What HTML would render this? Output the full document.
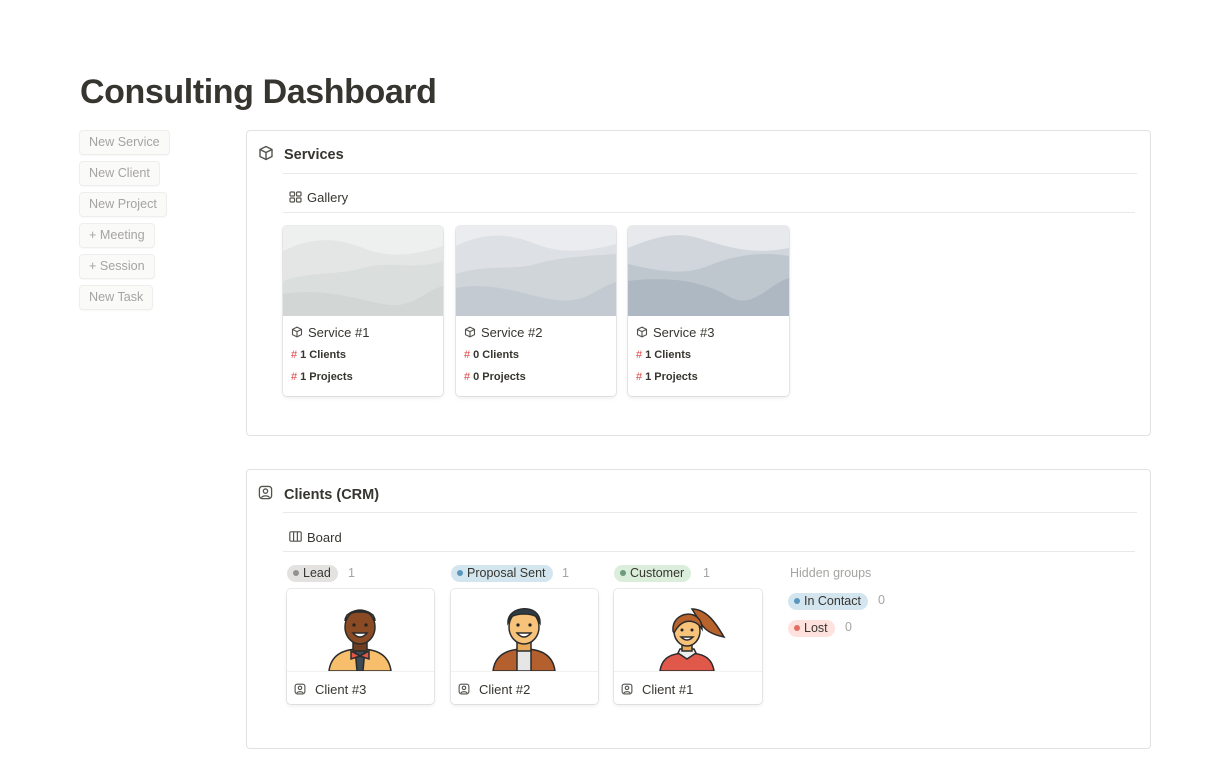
<!DOCTYPE html>
<html><head><meta charset="utf-8"><style>
*{box-sizing:border-box;margin:0;padding:0}
body{width:1229px;height:768px;background:#fff;font-family:"Liberation Sans",sans-serif;color:#37352f;position:relative;overflow:hidden}
.a{position:absolute}
h1{position:absolute;left:80px;top:73px;font-size:34px;font-weight:bold;color:#37352f;letter-spacing:-0.4px}
.btn{position:absolute;left:79px;height:25px;border:1px solid #eeeeec;border-radius:4px;background:#fafaf9;color:#a5a4a1;font-size:12.6px;line-height:23px;padding:0 9px;box-shadow:0 1px 1px rgba(0,0,0,.03)}
.box{position:absolute;left:246px;width:905px;border:1px solid #e3e2e0;border-radius:4px}
.hd{position:absolute;font-size:14.5px;font-weight:bold;color:#37352f}
.line{position:absolute;height:1px;background:#e9e9e7}
.sub{position:absolute;font-size:13px;color:#37352f}
.card{position:absolute;border-radius:4px;box-shadow:0 0 0 1px rgba(15,15,15,.08),0 2px 4px rgba(15,15,15,.08);overflow:hidden;background:#fff}
.ct{position:absolute;left:8px;font-size:13px;color:#37352f}
.pr{position:absolute;left:8px;font-size:11px;font-weight:bold;color:#37352f}
.pr b{color:#e03e3e;font-weight:normal;margin-right:3px}
.tag{position:absolute;height:17px;border-radius:9px;font-size:12.5px;line-height:17px;padding:0 7px 0 6px;color:#37352f}
.tag i{display:inline-block;width:6px;height:6px;border-radius:50%;margin-right:4px;vertical-align:1px}
.cnt{position:absolute;font-size:12.5px;color:#a5a4a1}
</style></head><body>
<h1>Consulting Dashboard</h1>
<div class="btn" style="top:130px">New Service</div>
<div class="btn" style="top:161px">New Client</div>
<div class="btn" style="top:192px">New Project</div>
<div class="btn" style="top:223px">+ Meeting</div>
<div class="btn" style="top:254px">+ Session</div>
<div class="btn" style="top:285px">New Task</div>

<div class="box" style="top:130px;height:306px"></div>
<svg class="a" style="left:258px;top:145px" width="16" height="16" viewBox="0 0 16 16" fill="none" stroke="#55534e" stroke-width="1.4" stroke-linejoin="round"><path d="M8 1.5L14 4.5V11.5L8 14.5L2 11.5V4.5Z M2 4.5L8 7.5L14 4.5 M8 7.5V14.5"/></svg>
<div class="hd" style="left:284px;top:147px">Services</div>
<div class="line" style="left:283px;top:173px;width:854px"></div>
<svg class="a" style="left:289px;top:191px" width="13" height="12" viewBox="0 0 13 12" fill="none" stroke="#55534e" stroke-width="1.2"><rect x="1" y="1" width="4.5" height="4" rx="1"/><rect x="7.5" y="1" width="4.5" height="4" rx="1"/><rect x="1" y="7" width="4.5" height="4" rx="1"/><rect x="7.5" y="7" width="4.5" height="4" rx="1"/></svg>
<div class="sub" style="left:307px;top:190px">Gallery</div>
<div class="line" style="left:283px;top:212px;width:852px"></div>

<div class="card" style="left:283px;top:226px;width:160px;height:170px">
<svg width="160" height="90" viewBox="0 0 160 90"><rect width="160" height="90" fill="#eef0ef"/><path d="M0 25C30 10 55 12 80 22S130 30 160 20V90H0Z" fill="#e3e6e5"/><path d="M0 55C30 45 50 50 80 42S130 45 160 35V90H0Z" fill="#dadedd"/><path d="M0 68C40 62 70 72 100 78S140 65 160 60V90H0Z" fill="#d2d7d6"/></svg>
<svg class="a" style="left:8px;top:100px" width="12" height="12" viewBox="0 0 16 16" fill="none" stroke="#55534e" stroke-width="1.5" stroke-linejoin="round"><path d="M8 1.5L14 4.5V11.5L8 14.5L2 11.5V4.5Z M2 4.5L8 7.5L14 4.5 M8 7.5V14.5"/></svg>
<div class="ct" style="left:25px;top:99px">Service #1</div>
<div class="pr" style="top:123px"><b>#</b>1 Clients</div>
<div class="pr" style="top:145px"><b>#</b>1 Projects</div></div>

<div class="card" style="left:456px;top:226px;width:160px;height:170px">
<svg width="160" height="90" viewBox="0 0 160 90"><rect width="160" height="90" fill="#eaecef"/><path d="M0 20C30 5 55 8 80 18S130 26 160 18V90H0Z" fill="#dde0e4"/><path d="M0 48C30 38 55 45 80 38S130 30 160 28V90H0Z" fill="#d0d5da"/><path d="M0 62C40 55 70 70 100 74S140 62 160 56V90H0Z" fill="#c4cad1"/></svg>
<svg class="a" style="left:8px;top:100px" width="12" height="12" viewBox="0 0 16 16" fill="none" stroke="#55534e" stroke-width="1.5" stroke-linejoin="round"><path d="M8 1.5L14 4.5V11.5L8 14.5L2 11.5V4.5Z M2 4.5L8 7.5L14 4.5 M8 7.5V14.5"/></svg>
<div class="ct" style="left:25px;top:99px">Service #2</div>
<div class="pr" style="top:123px"><b>#</b>0 Clients</div>
<div class="pr" style="top:145px"><b>#</b>0 Projects</div></div>

<div class="card" style="left:628px;top:226px;width:161px;height:170px">
<svg width="161" height="90" viewBox="0 0 161 90"><rect width="161" height="90" fill="#e8e9ec"/><path d="M0 22C25 12 45 5 70 12S120 30 161 22V90H0Z" fill="#d0d6db"/><path d="M0 38C30 45 55 50 80 40S130 25 161 30V90H0Z" fill="#bfc7ce"/><path d="M0 55C40 50 75 55 100 70S140 58 161 52V90H0Z" fill="#adb8c3"/></svg>
<svg class="a" style="left:8px;top:100px" width="12" height="12" viewBox="0 0 16 16" fill="none" stroke="#55534e" stroke-width="1.5" stroke-linejoin="round"><path d="M8 1.5L14 4.5V11.5L8 14.5L2 11.5V4.5Z M2 4.5L8 7.5L14 4.5 M8 7.5V14.5"/></svg>
<div class="ct" style="left:25px;top:99px">Service #3</div>
<div class="pr" style="top:123px"><b>#</b>1 Clients</div>
<div class="pr" style="top:145px"><b>#</b>1 Projects</div></div>

<div class="box" style="top:469px;height:280px"></div>
<svg class="a" style="left:258px;top:485px" width="15" height="15" viewBox="0 0 16 16" fill="none" stroke="#55534e" stroke-width="1.4"><rect x="1.5" y="1.5" width="13" height="13" rx="3"/><circle cx="8" cy="6.5" r="2.3"/><path d="M3.8 13.5C4.8 11 11.2 11 12.2 13.5"/></svg>
<div class="hd" style="left:284px;top:487px">Clients (CRM)</div>
<div class="line" style="left:283px;top:512px;width:854px"></div>
<svg class="a" style="left:289px;top:531px" width="13" height="11" viewBox="0 0 13 11" fill="none" stroke="#55534e" stroke-width="1.2"><rect x="0.8" y="0.8" width="11.4" height="9.4" rx="1.2"/><path d="M4.6 1V10 M8.4 1V10"/></svg>
<div class="sub" style="left:307px;top:530px">Board</div>
<div class="line" style="left:283px;top:551px;width:852px"></div>

<div class="tag" style="left:287px;top:565px;background:#e3e2e0"><i style="background:#91918e"></i>Lead</div>
<div class="cnt" style="left:348px;top:566px">1</div>
<div class="tag" style="left:451px;top:565px;background:#d3e5ef"><i style="background:#5b97bd"></i>Proposal Sent</div>
<div class="cnt" style="left:562px;top:566px">1</div>
<div class="tag" style="left:614px;top:565px;background:#dbeddb"><i style="background:#6c9b7d"></i>Customer</div>
<div class="cnt" style="left:703px;top:566px">1</div>
<div class="cnt" style="left:790px;top:566px">Hidden groups</div>
<div class="tag" style="left:788px;top:593px;background:#d3e5ef"><i style="background:#5b97bd"></i>In Contact</div>
<div class="cnt" style="left:878px;top:593px">0</div>
<div class="tag" style="left:788px;top:620px;background:#ffe2dd"><i style="background:#e16f64"></i>Lost</div>
<div class="cnt" style="left:845px;top:620px">0</div>

<div class="card" style="left:287px;top:589px;width:147px;height:115px">
<svg width="147" height="82" viewBox="0 0 147 82"><g stroke="#2b2b2b" stroke-width="1.5"><path d="M42 82C44 66 56 60 73 60S102 66 104 82Z" fill="#f7be6b"/><path d="M68 60H78L76 82H70Z" fill="#3c4a56"/><path d="M64 62L73 67L82 62L82 70L73 67L64 70Z" fill="#e0584a"/><path d="M66 50V62H80V50Z" fill="#6e3d1f"/><ellipse cx="73" cy="38" rx="15" ry="17" fill="#8a4b24"/><path d="M58 32C58 18 88 18 88 32L86 26C80 22 66 22 60 26Z" fill="#2f3b45"/><path d="M66 44Q73 52 80 44Z" fill="#fff"/></g><circle cx="67" cy="36" r="1.6" fill="#222"/><circle cx="79" cy="36" r="1.6" fill="#222"/></svg>
<div class="line" style="left:0;top:82px;width:147px;background:#f1f1ef"></div>
<svg class="a" style="left:7px;top:94px" width="12" height="12" viewBox="0 0 16 16" fill="none" stroke="#55534e" stroke-width="1.5"><rect x="1.5" y="1.5" width="13" height="13" rx="3"/><circle cx="8" cy="6.5" r="2.3"/><path d="M3.8 13.5C4.8 11 11.2 11 12.2 13.5"/></svg>
<div class="ct" style="left:28px;top:93px">Client #3</div></div>

<div class="card" style="left:451px;top:589px;width:147px;height:115px">
<svg width="147" height="82" viewBox="0 0 147 82"><g stroke="#2b2b2b" stroke-width="1.5"><path d="M42 82C44 66 56 60 73 60S102 66 104 82Z" fill="#b35f2e"/><path d="M66 60H80V82H66Z" fill="#e6e6e6"/><path d="M66 50V62H80V50Z" fill="#e8a95a"/><ellipse cx="73" cy="38" rx="15" ry="17" fill="#f7c27a"/><path d="M57 34C56 16 90 14 89 34L86 28C80 24 66 24 60 28Z" fill="#2f3b45"/><path d="M66 44Q73 52 80 44Z" fill="#fff"/></g><circle cx="67" cy="36" r="1.6" fill="#222"/><circle cx="79" cy="36" r="1.6" fill="#222"/></svg>
<div class="line" style="left:0;top:82px;width:147px;background:#f1f1ef"></div>
<svg class="a" style="left:7px;top:94px" width="12" height="12" viewBox="0 0 16 16" fill="none" stroke="#55534e" stroke-width="1.5"><rect x="1.5" y="1.5" width="13" height="13" rx="3"/><circle cx="8" cy="6.5" r="2.3"/><path d="M3.8 13.5C4.8 11 11.2 11 12.2 13.5"/></svg>
<div class="ct" style="left:28px;top:93px">Client #2</div></div>

<div class="card" style="left:614px;top:589px;width:148px;height:115px">
<svg width="148" height="82" viewBox="0 0 148 82"><g stroke="#2b2b2b" stroke-width="1.5"><path d="M78 20C95 20 105 40 110 48C100 46 92 42 88 36Z" fill="#b8632b"/><path d="M46 82C48 68 58 64 73 64S98 68 100 82Z" fill="#e0584a"/><path d="M64 64L73 70L82 64L80 60H66Z" fill="#eeeeee"/><path d="M68 52V62H78V52Z" fill="#e8a95a"/><ellipse cx="73" cy="42" rx="13" ry="15" fill="#f7c27a"/><path d="M59 42C57 22 88 18 88 40C82 30 68 28 60 44Z" fill="#b8632b"/><path d="M67 48Q73 54 79 48Z" fill="#fff"/></g><circle cx="68" cy="41" r="1.5" fill="#222"/><circle cx="78" cy="41" r="1.5" fill="#222"/></svg>
<div class="line" style="left:0;top:82px;width:148px;background:#f1f1ef"></div>
<svg class="a" style="left:7px;top:94px" width="12" height="12" viewBox="0 0 16 16" fill="none" stroke="#55534e" stroke-width="1.5"><rect x="1.5" y="1.5" width="13" height="13" rx="3"/><circle cx="8" cy="6.5" r="2.3"/><path d="M3.8 13.5C4.8 11 11.2 11 12.2 13.5"/></svg>
<div class="ct" style="left:28px;top:93px">Client #1</div></div>
</body></html>
